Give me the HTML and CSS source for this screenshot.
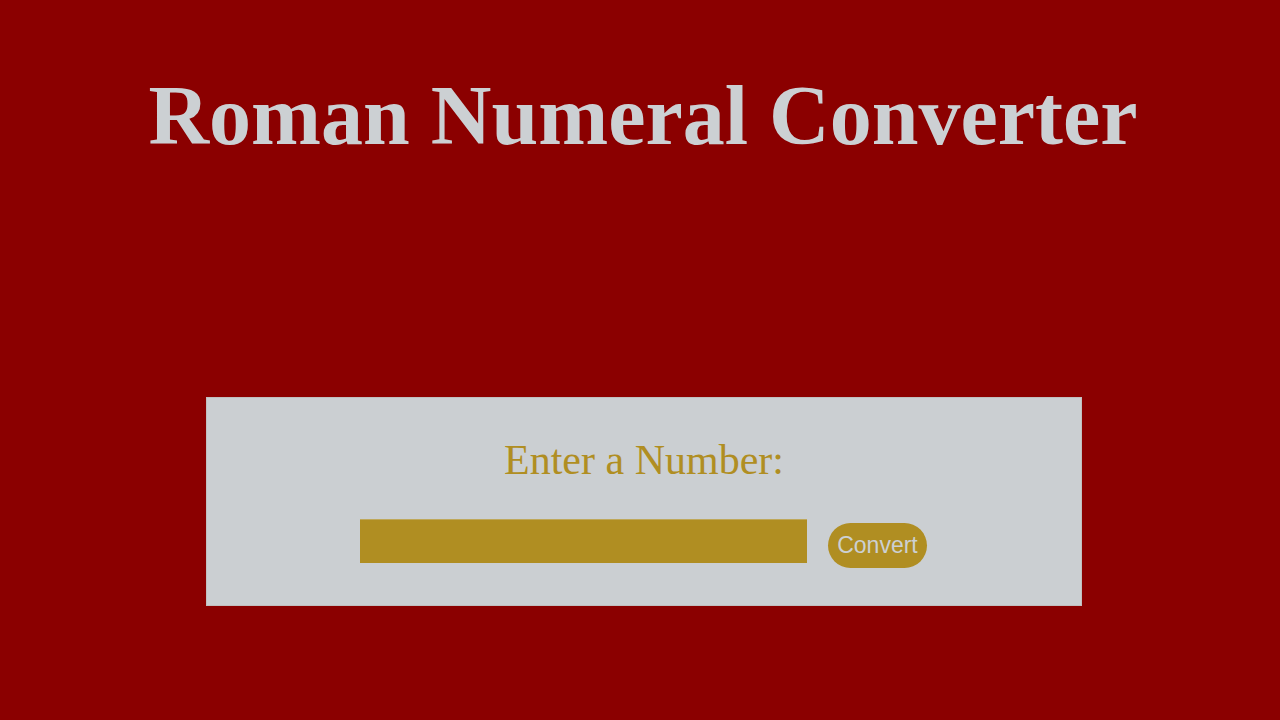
FILE: index.html
```html
<!DOCTYPE html>
<html lang="en">
<head>
<meta charset="utf-8">
<title>Roman Numeral Converter</title>
<link rel="stylesheet" href="styles.css">
</head>
<body>
<main class="page">
  <h1 class="title">Roman Numeral Converter</h1>
  <section class="panel">
    <label class="prompt" for="number">Enter a Number:</label>
    <div class="row">
      <input class="field" id="number" type="number">
      <button class="convert" type="button">Convert</button>
    </div>
  </section>
</main>
</body>
</html>
```
FILE: styles.css
```css
html, body {
  margin: 0;
  padding: 0;
  background: #8b0000;
}
body {
  font-family: "Liberation Serif", "Times New Roman", serif;
}
.page {
  display: flex;
  flex-direction: column;
  align-items: center;
  padding-left: 8px;
}
.title {
  margin: 69px 0 0 -2px;
  font-size: 84px;
  line-height: 93px;
  font-weight: bold;
  color: #ccd0d3;
}
.panel {
  margin-top: 235px;
  width: 874px;
  height: 207px;
  box-sizing: content-box;
  background: #cbcfd2;
  border: 1px solid #c2bfbf;
  display: flex;
  flex-direction: column;
  align-items: center;
}
.prompt {
  margin-top: 38px;
  font-size: 42px;
  line-height: 48px;
  color: #b08e22;
}
.row {
  margin-top: 35px;
  display: flex;
  align-items: flex-start;
  gap: 21px;
  margin-left: -1px;
}
.field {
  width: 447px;
  height: 44px;
  box-sizing: border-box;
  border: none;
  border-top: 1px solid #bfa85a;
  background: #b08e22;
  outline: none;
  margin: 0;
  padding: 0 8px;
  font-size: 22px;
}
.convert {
  margin-top: 4px;
  width: 99px;
  height: 45px;
  border: none;
  border-radius: 23px;
  background: #b08e22;
  color: #ccd0d3;
  font-family: "Liberation Sans", Arial, sans-serif;
  font-size: 23px;
  padding: 0;
}
```
